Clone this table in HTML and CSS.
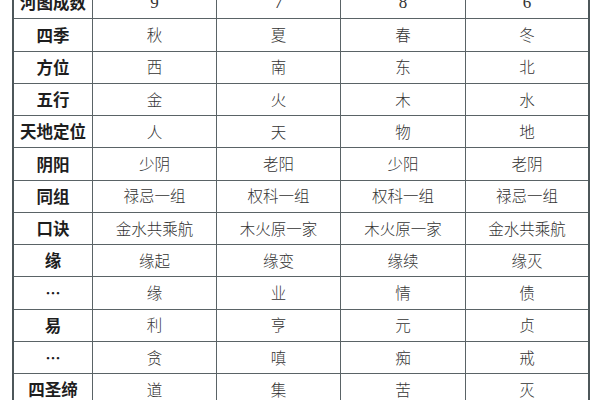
FILE: index.html
```html
<!DOCTYPE html>
<html lang="zh">
<head>
<meta charset="utf-8">
<link rel="stylesheet" href="styles.css">
</head>
<body>
<table class="grid">
  <colgroup>
    <col class="c1"><col class="c2"><col class="c3"><col class="c4"><col class="c5">
  </colgroup>
  <tbody>
    <tr><th>河图成数</th><td class="num">9</td><td class="num">7</td><td class="num">8</td><td class="num">6</td></tr>
    <tr><th>四季</th><td>秋</td><td>夏</td><td>春</td><td>冬</td></tr>
    <tr><th>方位</th><td>西</td><td>南</td><td>东</td><td>北</td></tr>
    <tr><th>五行</th><td>金</td><td>火</td><td>木</td><td>水</td></tr>
    <tr><th>天地定位</th><td>人</td><td>天</td><td>物</td><td>地</td></tr>
    <tr><th>阴阳</th><td>少阴</td><td>老阳</td><td>少阳</td><td>老阴</td></tr>
    <tr><th>同组</th><td>禄忌一组</td><td>权科一组</td><td>权科一组</td><td>禄忌一组</td></tr>
    <tr><th>口诀</th><td>金水共乘航</td><td>木火原一家</td><td>木火原一家</td><td>金水共乘航</td></tr>
    <tr><th>缘</th><td>缘起</td><td>缘变</td><td>缘续</td><td>缘灭</td></tr>
    <tr><th class="dots">⋯</th><td>缘</td><td>业</td><td>情</td><td>债</td></tr>
    <tr><th>易</th><td>利</td><td>亨</td><td>元</td><td>贞</td></tr>
    <tr><th class="dots">⋯</th><td>贪</td><td>嗔</td><td>痴</td><td>戒</td></tr>
    <tr><th>四圣缔</th><td>道</td><td>集</td><td>苦</td><td>灭</td></tr>
  </tbody>
</table>
</body>
</html>
```
FILE: styles.css
```css
html, body {
  margin: 0;
  padding: 0;
  background: #ffffff;
  overflow: hidden;
}
body {
  width: 600px;
  height: 400px;
}
.grid {
  margin: -13px 0 0 12px;
  border-collapse: separate;
  border-spacing: 0;
  border-left: 2px solid #4d575a;
  border-right: 2px solid #4d575a;
  table-layout: fixed;
  width: 578px;
}
.c1 { width: 79px; }
.c2 { width: 124px; }
.c3 { width: 124px; }
.c4 { width: 125px; }
.c5 { width: 122px; }
.grid tr {
  height: 32.25px;
}
.grid th, .grid td {
  padding: 0;
  text-align: center;
  vertical-align: middle;
  border-bottom: 1px solid #5a6366;
  border-right: 1px solid #5a6366;
  white-space: nowrap;
  line-height: 1;
}
.grid td:last-child {
  border-right: none;
}
.grid th {
  font-family: "Noto Sans CJK SC", "Noto Sans", sans-serif;
  font-weight: 700;
  font-size: 16.5px;
  color: #1e1e1e;
}
.grid td {
  font-family: "Noto Sans CJK SC", "Noto Sans", sans-serif;
  font-weight: 300;
  font-size: 15.5px;
  color: #333333;
}
.grid td.num {
  font-family: "Liberation Serif", serif;
  font-size: 17px;
}
.grid th.dots {
  font-size: 15px;
}
```
